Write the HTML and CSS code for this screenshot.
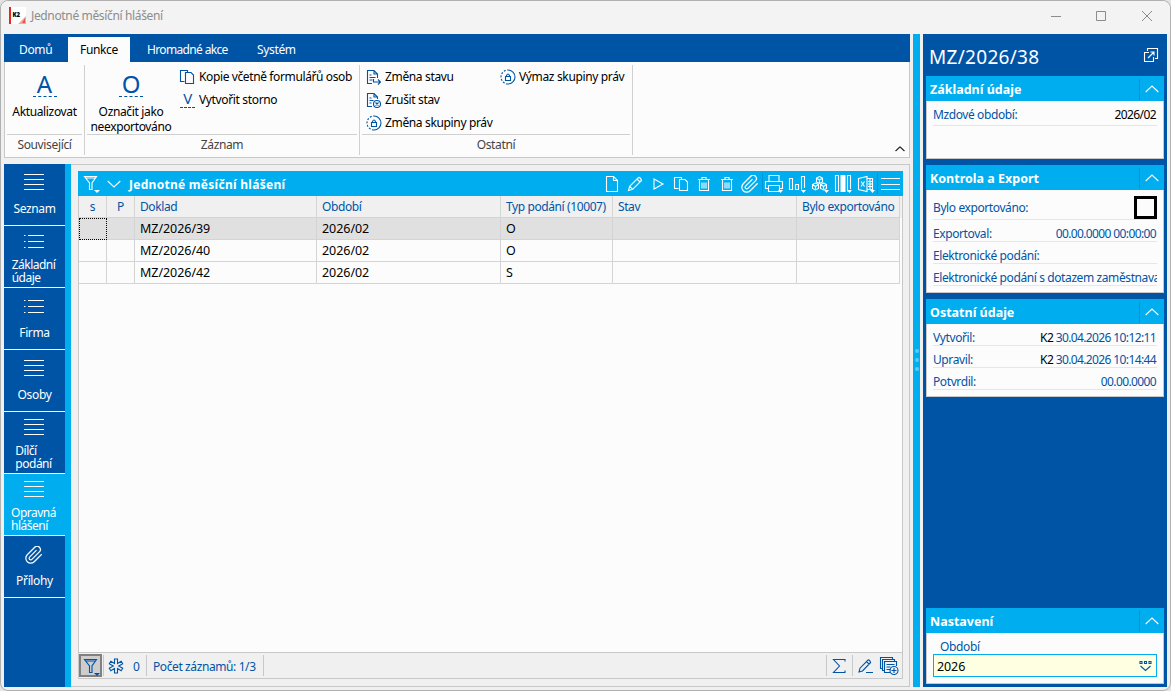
FILE: index.html
```
<!DOCTYPE html>
<html lang="cs">
<head>
    <meta charset="UTF-8">
    <meta name="viewport" content="width=device-width, initial-scale=1.0">
    <title>Jednotné měsíční hlášení</title>
    <link rel="stylesheet" href="styles.css">
</head>
<body>
    <!-- Sdílené ikony -->
    <svg class="defs" width="0" height="0">
        <symbol id="i-lines" viewBox="0 0 20 18"><path d="M0 .5h20M0 5.500h20M0 10.500h20M0 15.500h20"/></symbol>
        <symbol id="i-list" viewBox="0 0 20 18"><path d="M0 2.500h1.500M4 2.500h16M0 8.500h1.500M4 8.500h16M0 14.500h1.500M4 14.500h16"/></symbol>
        <symbol id="i-clip" viewBox="1 1 22 22"><path stroke-width="1.500" d="M21.440 11.050l-9.190 9.190a6 6 0 0 1-8.490-8.490l9.190-9.190a4 4 0 0 1 5.660 5.660l-9.200 9.190a2 2 0 0 1-2.830-2.830l8.490-8.480"/></symbol>
        <symbol id="i-up" viewBox="0 0 14 8"><path d="M.7 7L7 1l6.300 6"/></symbol>
        <symbol id="i-copy" viewBox="0 0 16 16"><path d="M5.500 12.500h-4v-11h7v2M6.500 3.500h5.500l2.500 2.500v8.500h-8z"/></symbol>
        <symbol id="i-funnel" viewBox="0 0 18 18"><path d="M1.500 1.500h12L9 8v6.500H6.500V8zM2.500 3h10"/><path class="fill" d="M11 15h6l-3 3z"/></symbol>
        <symbol id="i-trash" viewBox="0 0 16 16"><path d="M2 3.500h12M6 3V1.500h4V3M3.500 4v10.500h9V4M6 6.500v6M8 6.500v6M10 6.500v6"/></symbol>
        <symbol id="i-lock" viewBox="0 0 16 16"><path d="M8 1a7 7 0 0 1 0 14"/><path stroke-dasharray="2 1.500" d="M8 15A7 7 0 0 1 8 1"/><path d="M5.500 7.500h5v4h-5zM6.500 7.500v-1q1.500-3 3 0v1"/></symbol>
    </svg>

    <div class="window">
        <header class="titlebar">
            <svg class="logo" width="17" height="17" viewBox="0 0 17 17">
                <rect width="17" height="17" fill="#fff"/>
                <rect width="2" height="17" fill="#e4252b"/>
                <path d="M10 16l7-7v8H9z" fill="#f4a8a0"/>
                <path d="M13 16l3-5v5z" fill="#e4574f"/>
                <text x="3.500" y="10">K2</text>
            </svg>
            <span class="caption">Jednotné měsíční hlášení</span>
            <svg class="controls" width="106" height="14" viewBox="0 0 106 14">
                <path d="M1 7.500h10M46.500 2.500h9v9h-9zM92 2l10 10M102 2L92 12"/>
            </svg>
        </header>

        <div class="main">
            <div class="work">
                <nav class="tabs">
                    <span class="tab tab-home">Domů</span>
                    <span class="tab tab-func active">Funkce</span>
                    <span class="tab tab-bulk">Hromadné akce</span>
                    <span class="tab">Systém</span>
                </nav>

                <div class="ribbon">
                    <div class="group group-related">
                        <div class="group-body">
                            <div class="big"><span class="letter">A</span><span>Aktualizovat</span></div>
                        </div>
                        <div class="group-name">Související</div>
                    </div>
                    <div class="group group-record">
                        <div class="group-body">
                            <div class="big"><span class="letter">O</span><span>Označit jako<br>neexportováno</span></div>
                            <div class="cmds">
                                <div class="cmd cmd-copy"><svg class="ico" width="16" height="16"><use href="#i-copy"/></svg>Kopie včetně formulářů osob</div>
                                <div class="cmd"><span class="letter-small">V</span>Vytvořit storno</div>
                            </div>
                        </div>
                        <div class="group-name">Záznam</div>
                    </div>
                    <div class="group group-other">
                        <div class="group-body">
                            <div class="cmds cmds-state">
                                <div class="cmd">
                                    <svg class="ico" width="16" height="16" viewBox="0 0 16 16"><path d="M6 14.500H1.500v-13H8L11.500 5v4M8 1.500V5h3.500M3.500 6h2M3.500 8.500h6M3.500 11h3M7.500 10v3h7M12 10.500l2.500 2.500-2.500 2.500"/></svg>
                                    Změna stavu
                                </div>
                                <div class="cmd">
                                    <svg class="ico" width="16" height="16" viewBox="0 0 16 16"><path d="M6 14.500H1.500v-13H8L11.500 5v2M8 1.500V5h3.500M3.500 6h2M3.500 8.500h4M3.500 11h2M9.500 10.500l3 3M12.500 10.500l-3 3"/><circle cx="11" cy="12" r="3.500"/></svg>
                                    Zrušit stav
                                </div>
                                <div class="cmd"><svg class="ico" width="16" height="16"><use href="#i-lock"/></svg>Změna skupiny práv</div>
                            </div>
                            <div class="cmds">
                                <div class="cmd cmd-wide"><svg class="ico" width="16" height="16"><use href="#i-lock"/></svg>Výmaz skupiny práv</div>
                            </div>
                        </div>
                        <div class="group-name">Ostatní</div>
                    </div>
                    <svg class="collapse" width="10" height="6" viewBox="0 0 14 8"><use href="#i-up"/></svg>
                </div>

                <div class="content">
                    <nav class="side">
                        <div class="side-item"><svg class="ico" width="20" height="18"><use href="#i-lines"/></svg><span>Seznam</span></div>
                        <div class="side-item two"><svg class="ico" width="20" height="18"><use href="#i-list"/></svg><span>Základní<br>údaje</span></div>
                        <div class="side-item"><svg class="ico" width="20" height="18"><use href="#i-list"/></svg><span>Firma</span></div>
                        <div class="side-item"><svg class="ico" width="20" height="18"><use href="#i-lines"/></svg><span>Osoby</span></div>
                        <div class="side-item two"><svg class="ico" width="20" height="18"><use href="#i-lines"/></svg><span>Dílčí<br>podání</span></div>
                        <div class="side-item two active"><svg class="ico" width="20" height="18"><use href="#i-lines"/></svg><span>Opravná<br>hlášení</span></div>
                        <div class="side-item"><svg class="ico" width="20" height="18"><use href="#i-clip"/></svg><span>Přílohy</span></div>
                    </nav>

                    <div class="frame">
                        <section class="browser">
                            <div class="browser-head">
                                <svg class="ico" width="18" height="18"><use href="#i-funnel"/></svg>
                                <svg class="ico flip" width="14" height="8"><use href="#i-up"/></svg>
                                <h2>Jednotné měsíční hlášení</h2>
                                <div class="tools">
                                    <svg class="ico" width="16" height="16" viewBox="0 0 16 16"><path d="M2.500.5h7l4 4v11h-11zM9.500.5v4h4"/></svg>
                                    <svg class="ico" width="16" height="16" viewBox="0 0 16 16"><path d="M1.500 14.500l1.200-4.200L11.500 1.500q1.800-.6 3 3L5.700 13.300zM10 3l3 3M2.700 10.300l3 3"/></svg>
                                    <svg class="ico" width="16" height="16" viewBox="0 0 16 16"><path d="M4 3l9 5-9 5z"/></svg>
                                    <svg class="ico" width="16" height="16"><use href="#i-copy"/></svg>
                                    <svg class="ico" width="16" height="16"><use href="#i-trash"/></svg>
                                    <svg class="ico" width="16" height="16"><use href="#i-trash"/></svg>
                                    <svg class="ico clip" width="18" height="18"><use href="#i-clip"/></svg>
                                </div>
                                <div class="tools tools-menu">
                                    <svg class="ico" width="20" height="20" viewBox="0 0 20 20"><path d="M5 7V1.500h10V7M4 14.500H1.500v-7h17v7H16M4.500 11.500h11v6h-11z"/><path class="fill" d="M14 16h5l-2.500 3z"/></svg>
                                    <svg class="ico" width="20" height="20" viewBox="0 0 20 20"><path d="M2.500 4.500h3v11h-3zM8.500 10.500h3v5h-3zM17.500 14V2.500h-3v13"/><path class="fill" d="M14 16h5l-2.500 3z"/></svg>
                                    <svg class="ico" width="20" height="20" viewBox="0 0 20 20"><path d="M9.500 2.500l3 1.500v4l-3 1.500-3-1.500V4zM5.500 9l3 1.500v4l-3 1.500-3-1.500v-4zM13.500 9l3 1.500v4l-3 1.500-3-1.500v-4zM6.500 4l3 2 3-2M9.500 6v3M2.500 10.500l3 2 3-2M5.500 12.500V16M10.500 10.500l3 2 3-2M13.500 12.500V16"/><path class="fill" d="M14 16h5l-2.500 3z"/></svg>
                                    <svg class="ico" width="20" height="20" viewBox="0 0 20 20"><path d="M2.500 1.500h3v16h-3zM17.500 15V1.500h-3v16"/><path class="fill" d="M7.500 1h5v17h-5zM14 16h5l-2.500 3z"/></svg>
                                    <svg class="ico" width="20" height="20" viewBox="0 0 20 20"><path d="M2.500 4.500L11 2.500v15l-8.500-2zM11 4.500h5.500v11H11M12 7.500h4M12 10h4M12 12.500h4M5 7.500l3.500 5M8.500 7.500l-3.500 5M14 4.500v11"/><path class="fill" d="M14 16h5l-2.500 3z"/></svg>
                                </div>
                                <svg class="ico burger" width="19" height="16" viewBox="0 0 19 16"><path d="M0 2.500h19M0 8.500h19M0 13.500h19"/></svg>
                            </div>

                            <table>
                                <colgroup>
                                    <col class="c-s"><col class="c-p"><col class="c-doc"><col class="c-per"><col class="c-type"><col class="c-state"><col class="c-exp">
                                </colgroup>
                                <thead>
                                    <tr><th class="mid">s</th><th class="mid">P</th><th>Doklad</th><th>Období</th><th>Typ podání (10007)</th><th>Stav</th><th>Bylo exportováno</th></tr>
                                </thead>
                                <tbody>
                                    <tr class="selected"><td class="focus"></td><td></td><td>MZ/2026/39</td><td>2026/02</td><td>O</td><td></td><td></td></tr>
                                    <tr><td></td><td></td><td>MZ/2026/40</td><td>2026/02</td><td>O</td><td></td><td></td></tr>
                                    <tr><td></td><td></td><td>MZ/2026/42</td><td>2026/02</td><td>S</td><td></td><td></td></tr>
                                </tbody>
                            </table>

                            <div class="status">
                                <span class="filter-btn"><svg class="ico" width="18" height="18"><use href="#i-funnel"/></svg></span>
                                <span class="cell marked">
                                    <svg class="ico" width="16" height="16" viewBox="0 0 16 16"><path d="M6.500 1h3v4.500l3.700-2.300 1.500 2.500L10.700 8l4 2.300-1.500 2.500-3.700-2.300V15h-3v-4.500l-3.700 2.300-1.500-2.500L5.300 8l-4-2.300 1.500-2.500 3.700 2.300z"/></svg>
                                    0
                                </span>
                                <span class="cell count">Počet záznamů: 1/3</span>
                                <span class="cell sum"><svg class="ico" width="16" height="16" viewBox="0 0 16 16"><path d="M14 3.500v-2H2.500l6 6.500-6 6.500H14v-2"/></svg></span>
                                <span class="cell edit">
                                    <svg class="ico" width="17" height="16" viewBox="0 0 17 16"><path d="M2 14l1-3.800L11 2q1.700-.5 2.600 2.500L5.500 13zM9.500 3.500l2.600 2.600M9 14.500h7"/></svg>
                                    <svg class="ico" width="20" height="20" viewBox="0 0 20 20"><path d="M3 12.500H1.500v-11h12V3M5 14.500H3.500v-11h12V6M11 16.500H5.500v-11h12V10M7.500 8.500h8M7.500 11h4M7.500 13.500h4M15 12v5M12.500 14.500h5"/><circle cx="15" cy="14.500" r="4"/></svg>
                                </span>
                            </div>
                        </section>
                    </div>
                </div>
            </div>

            <div class="splitter"><i></i><i></i><i></i></div>

            <aside class="preview">
                <div class="preview-title">
                    <h1>MZ/2026/38</h1>
                    <svg class="ico" width="16" height="16" viewBox="0 0 16 16"><path d="M4.500 4V1.500h10v10H12M6 5.500H1.500v9h9V10M5 11l6-6M7.500 5h3.500v3.500"/></svg>
                </div>

                <section class="card card-basic">
                    <h3>Základní údaje<span class="toggle"><svg class="ico" width="14" height="8"><use href="#i-up"/></svg></span></h3>
                    <div class="card-body">
                        <div class="field first"><label>Mzdové období:</label><b>2026/02</b></div>
                    </div>
                </section>

                <section class="card card-export">
                    <h3>Kontrola a Export<span class="toggle"><svg class="ico" width="14" height="8"><use href="#i-up"/></svg></span></h3>
                    <div class="card-body">
                        <div class="field tall"><label>Bylo exportováno:</label><span class="check"></span></div>
                        <div class="field"><label>Exportoval:</label><span>00.00.0000 00:00:00</span></div>
                        <div class="field"><label>Elektronické podání:</label></div>
                        <div class="field"><label>Elektronické podání s dotazem zaměstnavatele:</label></div>
                    </div>
                </section>

                <section class="card card-other">
                    <h3>Ostatní údaje<span class="toggle"><svg class="ico" width="14" height="8"><use href="#i-up"/></svg></span></h3>
                    <div class="card-body">
                        <div class="field"><label>Vytvořil:</label><span><b>K2</b> 30.04.2026 10:12:11</span></div>
                        <div class="field"><label>Upravil:</label><span><b>K2</b> 30.04.2026 10:14:44</span></div>
                        <div class="field"><label>Potvrdil:</label><span>00.00.0000</span></div>
                    </div>
                </section>

                <section class="card card-settings">
                    <h3>Nastavení<span class="toggle"><svg class="ico" width="14" height="8"><use href="#i-up"/></svg></span></h3>
                    <div class="card-body">
                        <div class="set-label">Období</div>
                        <div class="combo">
                            <span>2026</span>
                            <svg class="ico" width="13" height="12" viewBox="0 0 13 12"><path d="M1 1.500h2v2H1zM5.500 1.500h2v2h-2zM10 1.500h2v2h-2zM1.500 6l5 4.500 5-4.500"/></svg>
                        </div>
                    </div>
                </section>
            </aside>
        </div>
    </div>
</body>
</html>
```
FILE: styles.css
```
* {
    box-sizing: border-box;
}
body {
    margin: 0;
    background: #e3e3e3;
    font-family: "Noto Sans", "Open Sans", sans-serif;
    font-size: 12px;
    letter-spacing: -0.35px;
    color: #000;
    overflow: hidden;
}
h1, h2, h3 {
    margin: 0;
}
svg {
    display: block;
    flex: none;
}
.defs {
    position: absolute;
}
.ico {
    fill: none;
    stroke: currentColor;
    stroke-width: 1.1;
}
.fill {
    fill: currentColor;
    stroke: none;
}
.window {
    height: 691px;
    padding: 0 3px 3px;
    display: flex;
    flex-direction: column;
    background: #f0f0f0;
    border: 1px solid #b0b0b0;
    border-radius: 8px;
}

/* titulek okna */
.titlebar {
    height: 33px;
    margin: 0 -3px;
    padding: 0 14px 4px 8px;
    display: flex;
    align-items: center;
    background: #f3f3f3;
    border-radius: 8px 8px 0 0;
}
.logo text {
    font-size: 6px;
    font-weight: 900;
    letter-spacing: 0;
}
.caption {
    margin-left: 5px;
    color: #8c8c8c;
}
.controls {
    margin-left: auto;
    fill: none;
    stroke: #8c8c8c;
}

.main {
    flex: 1;
    display: flex;
    min-height: 0;
}
.work {
    width: 906px;
    display: flex;
    flex-direction: column;
}

/* pás karet */
.tabs {
    height: 28px;
    padding-top: 3px;
    display: flex;
    background: #0054a6;
    color: #fff;
}
.tab {
    line-height: 26px;
    height: 25px;
    padding-left: 17px;
}
.tab-home {
    width: 64px;
    padding-left: 15px;
}
.tab-func {
    width: 62px;
    padding-left: 12px;
}
.tab-bulk {
    width: 110px;
    letter-spacing: -0.7px;
}
.tab.active {
    background: #fcfcfc;
    color: #000;
}
.tab-bulk {
    letter-spacing: -0.65px;
}
.ribbon {
    height: 96px;
    padding-top: 3px;
    display: flex;
    background: #fcfcfc;
    border: 1px solid #c8c8c8;
    border-top: 0;
}
.group {
    height: 90px;
    padding: 0 2px;
    border-right: 1px solid #d0d0d0;
}
.group-related {
    width: 80px;
}
.group-record {
    width: 275px;
}
.group-other {
    width: 273px;
}
.group-body {
    height: 70px;
    display: flex;
    border-bottom: 1px solid #d0d0d0;
}
.group-name {
    line-height: 19px;
    text-align: center;
    color: #444;
}
.big {
    width: 100%;
    padding-top: 6px;
    display: flex;
    flex-direction: column;
    align-items: center;
    text-align: center;
    line-height: 15px;
}
.group-record .big {
    width: 88px;
}
.letter {
    width: 24px;
    height: 26px;
    margin-bottom: 7px;
    border-bottom: 1px dashed #0054a6;
    font-size: 24px;
    line-height: 25px;
    letter-spacing: 0;
    color: #0054a6;
}
.letter-small {
    width: 15px;
    height: 17px;
    margin-right: 4px;
    border-bottom: 1px dashed #0054a6;
    font-size: 15px;
    line-height: 15px;
    text-align: center;
    color: #0054a6;
}
.cmds {
    padding-left: 5px;
    white-space: nowrap;
}
.cmds-state {
    width: 134px;
}
.cmd {
    height: 23px;
    display: flex;
    align-items: center;
}
.cmd .ico {
    margin-left: -1px;
    margin-right: 3px;
    color: #0054a6;
}
.cmd-copy .ico {
    margin-right: 4px;
}
.cmd-copy {
    letter-spacing: -0.38px;
}
.collapse {
    margin: auto 4px 5px auto;
    fill: none;
    stroke: #222;
    stroke-width: 1.8;
}

/* levé menu */
.content {
    flex: 1;
    margin-top: 6px;
    display: flex;
}
.side {
    width: 67px;
    background: #0054a6;
    border-right: 6px solid #00aeef;
    color: #fff;
}
.side-item {
    height: 62px;
    padding-top: 10px;
    display: flex;
    flex-direction: column;
    align-items: center;
    border-bottom: 1px solid #fff;
    line-height: 13px;
}
.side-item .ico {
    margin-right: 1px;
}
.side-item span {
    margin-top: 10px;
}
.side-item.two {
    padding-top: 7px;
}
.side-item.two span {
    margin-top: 7px;
    margin-right: 2px;
    letter-spacing: -0.5px;
}
.side-item.active {
    background: #00aeef;
}

/* tabulka */
.frame {
    flex: 1;
    padding: 6px 6px 7px 7px;
    border: 1px solid #c8c8c8;
    border-left: 0;
}
.browser {
    height: 100%;
    display: flex;
    flex-direction: column;
    background: #fcfcfc;
    border: 1px solid #c8c8c8;
    border-top: 0;
}
.browser-head {
    height: 25px;
    margin: 0 -1px;
    padding: 0 3px 0 5px;
    display: flex;
    align-items: center;
    background: #00aeef;
    color: #fff;
}
.browser-head h2 {
    padding-top: 1px;
    font-size: 12px;
    letter-spacing: 0.28px;
    margin-left: 8px;
}
.flip {
    margin-left: 6px;
    transform: scaleY(-1);
}
.tools {
    margin-left: auto;
    display: flex;
    align-items: center;
    gap: 7px;
    margin-right: 3px;
}
.tools .clip {
    margin-left: -1px;
}
.tools-menu {
    height: 21px;
    margin: 0;
    padding: 0 1px;
    gap: 3px;
    border: solid #0095d8;
    border-width: 0 1px;
}
.burger {
    margin-left: 3px;
}
table {
    width: 821px;
    table-layout: fixed;
    border-collapse: separate;
    border-spacing: 0;
    font-size: 12.5px;
}
thead {
    box-shadow: 2px 0 #f0f0f0;
}
.c-s, .c-p {
    width: 28px;
}
.c-doc {
    width: 182px;
}
.c-per, .c-state {
    width: 184px;
}
.c-type {
    width: 112px;
}
.c-exp {
    width: 103px;
}
th, td {
    height: 22px;
    padding: 0 0 0 5px;
    line-height: 20px;
    border-right: 1px solid #d4d4d4;
    border-bottom: 1px solid #d4d4d4;
    white-space: nowrap;
}
td {
    padding-top: 1px;
    letter-spacing: -0.05px;
}
th {
    background: #f0f0f0;
    color: #0054a6;
    font-size: 12px;
    font-weight: normal;
    text-align: left;
    letter-spacing: -0.4px;
}
th.mid {
    padding: 0;
    text-align: center;
}
.selected td {
    background: #e0e0e0;
}
.selected .focus {
    border: 1px dotted #000;
}

.status {
    height: 26px;
    margin-top: auto;
    display: flex;
    align-items: center;
    background: #f0f0f0;
    border-top: 1px solid #c8c8c8;
    color: #0054a6;
}
.filter-btn {
    width: 23px;
    height: 23px;
    padding: 2px;
    background: #cdcdcd;
    border: 2px solid #808080;
}
.cell {
    height: 21px;
    padding-top: 1px;
    display: flex;
    align-items: center;
}
.marked {
    width: 44px;
    margin-left: 1px;
    padding-left: 4px;
    gap: 9px;
    border: solid #c8c8c8;
    border-width: 0 1px;
}
.count {
    width: 117px;
    padding-left: 6px;
    border-right: 1px solid #c8c8c8;
    letter-spacing: -0.4px;
}
.sum {
    width: 27px;
    margin-left: auto;
    padding-left: 4px;
    border: solid #c8c8c8;
    border-width: 0 1px;
}
.edit {
    padding: 0 3px 0 4px;
    gap: 5px;
}

.splitter {
    width: 7px;
    margin: 0 3px;
    padding-bottom: 2px;
    display: flex;
    flex-direction: column;
    align-items: center;
    justify-content: center;
    gap: 5px;
    background: #00aeef;
}
.splitter i {
    width: 4px;
    height: 4px;
    border-radius: 50%;
    background: #5cc9f5;
}

/* pravý náhled */
.preview {
    width: 244px;
    padding: 0 3px 3px;
    display: flex;
    flex-direction: column;
    background: #0054a6;
}
.preview-title {
    height: 42px;
    padding: 3px 5px 0 3px;
    display: flex;
    align-items: center;
    justify-content: space-between;
    color: #fff;
}
.preview-title h1 {
    font-size: 19px;
    font-weight: normal;
    letter-spacing: 0.3px;
}
.preview-title .ico {
    margin-bottom: 4px;
}
.card {
    margin-bottom: 6px;
    display: flex;
    flex-direction: column;
}
.card-basic {
    height: 83px;
}
.card-export {
    height: 128px;
}
.card-other {
    height: 98px;
}
.card-settings {
    height: 76px;
    margin: auto 0 0;
}
.card h3 {
    height: 25px;
    padding-top: 1px;
    padding-left: 4px;
    display: flex;
    align-items: center;
    justify-content: space-between;
    background: #00aeef;
    color: #fff;
    font-size: 12.5px;
    letter-spacing: 0;
}
.toggle {
    height: 21px;
    padding: 6px 5px 0 5px;
    border-left: 1px solid #0095d8;
}
.card-body {
    flex: 1;
    padding: 0 6px;
    background: #fcfcfc;
    border: 1px solid #c8c8c8;
    border-top: 0;
}
.field {
    height: 22px;
    padding-top: 6px;
    padding-right: 1px;
    display: flex;
    align-items: center;
    justify-content: space-between;
    border-bottom: 1px solid #e6e6e6;
    line-height: 15px;
    white-space: nowrap;
    overflow: hidden;
    color: #0054a6;
    letter-spacing: -0.4px;
}
.field > span {
    letter-spacing: -0.62px;
}
.field b {
    font-weight: normal;
    color: #000;
    letter-spacing: -0.6px;
}
.first {
    height: 25px;
    padding-top: 3px;
}
.tall {
    height: 30px;
    padding-top: 6px;
    padding-right: 0;
}
.check {
    width: 23px;
    height: 23px;
    border: 3px solid #000;
}
.set-label {
    padding-left: 7px;
    line-height: 16px;
    margin-top: 5px;
    padding-top: 1px;
    height: 16px;
    color: #0054a6;
}
.combo {
    height: 23px;
    padding: 1px 4px 0 3px;
    display: flex;
    align-items: center;
    justify-content: space-between;
    background: #ffffe1;
    border: 1px solid #00aeef;
    font-size: 12.5px;
    letter-spacing: -0.1px;
}
.combo .ico {
    color: #0054a6;
}
```
